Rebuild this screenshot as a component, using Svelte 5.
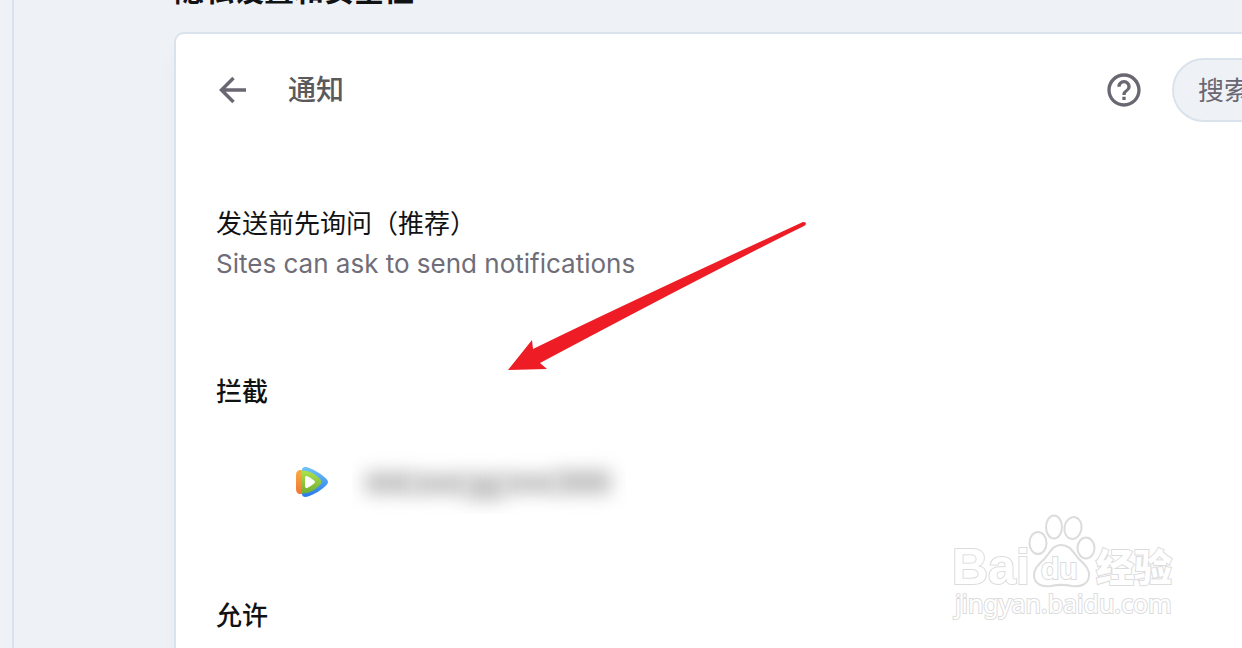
<script lang="ts">
	let query = '';

	const siteName = [
		{ x: 13, y: 22, width: 49, height: 22 },
		{ x: 60, y: 24, width: 56, height: 20 },
		{ x: 114, y: 24, width: 38, height: 26 },
		{ x: 150, y: 24, width: 56, height: 19 },
		{ x: 204, y: 20, width: 55, height: 24 }
	];
</script>

<div class="page">
	<aside></aside>
	<main>
		<h1>隐私设置和安全性</h1>
		<section class="card">
			<header>
				<button class="icon-button" aria-label="返回">
					<svg width="40" height="40" viewBox="0 0 40 40" fill="none" stroke="currentColor" stroke-width="3.500">
						<path d="M34 20H10M21.500 8L9.500 20l12 12" />
					</svg>
				</button>
				<h2>通知</h2>
				<button class="icon-button" aria-label="帮助">
					<svg width="40" height="40" viewBox="0 0 24 24" fill="currentColor">
						<path
							d="M11 18h2v-2h-2v2zm1-16C6.480 2 2 6.480 2 12s4.480 10 10 10 10-4.480 10-10S17.520 2 12 2zm0 18c-4.410 0-8-3.590-8-8s3.590-8 8-8 8 3.590 8 8-3.590 8-8 8zm0-14c-2.210 0-4 1.790-4 4h2c0-1.100.9-2 2-2s2 .9 2 2c0 2-3 1.750-3 5h2c0-2.250 3-2.500 3-5 0-2.210-1.790-4-4-4z"
						/>
					</svg>
				</button>
				<input type="search" aria-label="搜索" placeholder="搜索" bind:value={query} />
			</header>

			<div class="setting">
				<p class="label">发送前先询问（推荐）</p>
				<p class="description">Sites can ask to send notifications</p>
			</div>

			<h3>拦截</h3>
			<div class="site">
				<svg class="favicon" width="34" height="32" viewBox="0 0 34 32">
					<defs>
						<linearGradient id="blue" x1="0" y1="0" x2="0" y2="1">
							<stop offset="0" stop-color="#70c3f8" />
							<stop offset="1" stop-color="#2878ec" />
						</linearGradient>
						<linearGradient id="orange" x1="0" y1="0" x2="0" y2="1">
							<stop offset="0" stop-color="#f5ae43" />
							<stop offset="1" stop-color="#f07634" />
						</linearGradient>
						<linearGradient id="green" x1="0" y1="0" x2="0" y2="1">
							<stop offset="0" stop-color="#aee34c" />
							<stop offset="1" stop-color="#70ad31" />
						</linearGradient>
					</defs>
					<path fill="url(#blue)" d="M7 4C7 1 10 .5 13 1.500C20 4 25 7 31 12.500Q35 16 31 19.500C25 25 20 28 13 30.500C10 31.500 7 31 7 28z" />
					<path fill="url(#orange)" d="M7 4C2 3.500 1 6 1 10v12c0 4 1 6.500 6 6z" />
					<path fill="url(#green)" d="M6.500 4.500C14 4 20 8 25 13q3 3 0 6C20 24 14 28 6.500 27.500z" />
					<path fill="#fff" d="M10 12q0-3 3-1.500 3 1.500 6 4 2 1.500 0 3-3 2.500-6 4-3 1.500-3-1.500z" />
				</svg>
				<svg class="hidden-name" width="274" height="64" viewBox="0 0 274 64" aria-hidden="true">
					{#each siteName as part}
						<rect {...part} />
					{/each}
				</svg>
			</div>

			<h3>允许</h3>
		</section>
	</main>

	<svg class="pointer" width="300" height="152" viewBox="0 0 300 152" aria-hidden="true">
		<path fill="#ee1c25" d="M1 151L25 121l1 9Q120 84 296 3q3-.5 3 2-.2 1.200-2 2.100Q200 55 33 144l7 6z" />
	</svg>

	<svg class="watermark" width="232" height="112" viewBox="0 0 232 112" aria-hidden="true">
		<g fill="#fff" stroke="#dcdcdc" stroke-width="2">
			<text x="2" y="73" font-size="50" font-weight="700">Bai</text>
			<ellipse cx="88" cy="32" rx="8.500" ry="11" />
			<ellipse cx="104" cy="16" rx="8" ry="11.500" />
			<ellipse cx="123" cy="17" rx="8.500" ry="11" transform="rotate(10 123 17)" />
			<ellipse cx="136" cy="37" rx="8.500" ry="10.500" />
			<path d="M111 34c9 0 12 7 17 13 6 6 12 11 11 18-1 9-9 11-17 10-7-1.500-14-1.500-21 0-9 1.500-17-2-17-11 0-8 7-12 12-18s7-12 15-12z" />
			<text x="91" y="68" font-size="30" font-weight="700">du</text>
			<text class="chinese" x="146" y="70" font-size="38" font-weight="900">经验</text>
			<text class="address" x="5" y="102" font-size="25">jingyan.baidu.com</text>
		</g>
	</svg>
</div>

<style>
	:global(body) {
		margin: 0;
		overflow: hidden;
		background: #eef2f7;
	}
	.page {
		position: relative;
		display: flex;
		min-height: 100vh;
		max-height: 100vh;
		overflow: hidden;
		font-family: Inter, 'Noto Sans CJK SC', sans-serif;
		color: #111214;
	}
	aside {
		flex: 0 0 12px;
		border-right: 2px solid #dae3eb;
	}
	main {
		flex: 1;
		display: flex;
		flex-direction: column;
		margin: -30px -240px 0 160px;
	}
	h1,
	h2,
	h3,
	p {
		margin: 0;
	}
	h1 {
		font-size: 30px;
		line-height: 40px;
		font-weight: 700;
		margin-bottom: 22px;
	}
	.card {
		flex: 1;
		padding: 24px 40px;
		background: #fff;
		border: 2px solid #dae3eb;
		border-radius: 10px;
		box-shadow: 0 20px 24px rgba(60, 70, 90, 0.03);
	}
	header {
		display: flex;
		align-items: center;
		margin-bottom: 82px;
	}
	.icon-button {
		display: flex;
		padding: 0;
		margin-left: -4px;
		border: 0;
		background: none;
		color: #6a6772;
		cursor: pointer;
	}
	h2 {
		flex: 1;
		margin-left: 36px;
		font-size: 28px;
		line-height: 40px;
		font-weight: 500;
		color: #5a5a5c;
	}
	input {
		box-sizing: border-box;
		width: 268px;
		height: 64px;
		margin-left: 28px;
		padding: 0 24px;
		border: 2px solid #dae3eb;
		border-radius: 32px;
		background: #eef2f7;
		font: inherit;
		font-size: 26px;
	}
	input::placeholder {
		color: #6a6772;
		opacity: 1;
	}
	.label,
	.description {
		font-size: 26px;
		line-height: 40px;
	}
	.description {
		color: #6f6d78;
	}
	h3 {
		margin-top: 88px;
		font-size: 26px;
		line-height: 40px;
		font-weight: 500;
	}
	.site {
		display: flex;
		align-items: center;
		height: 64px;
		margin: 38px 0 -6px 79px;
	}
	.hidden-name {
		margin-left: 23px;
		overflow: hidden;
	}
	.hidden-name rect {
		fill: #c4c4c4;
		filter: blur(9px);
	}
	.pointer {
		position: absolute;
		left: 507px;
		top: 219px;
	}
	.watermark {
		position: absolute;
		left: 950px;
		top: 511px;
		font-family: 'Liberation Sans', sans-serif;
	}
	.watermark text {
		paint-order: stroke;
	}
	.watermark .chinese {
		font-family: 'Noto Sans CJK SC', sans-serif;
	}
	.watermark .address {
		font-family: 'Noto Sans', sans-serif;
	}
</style>
